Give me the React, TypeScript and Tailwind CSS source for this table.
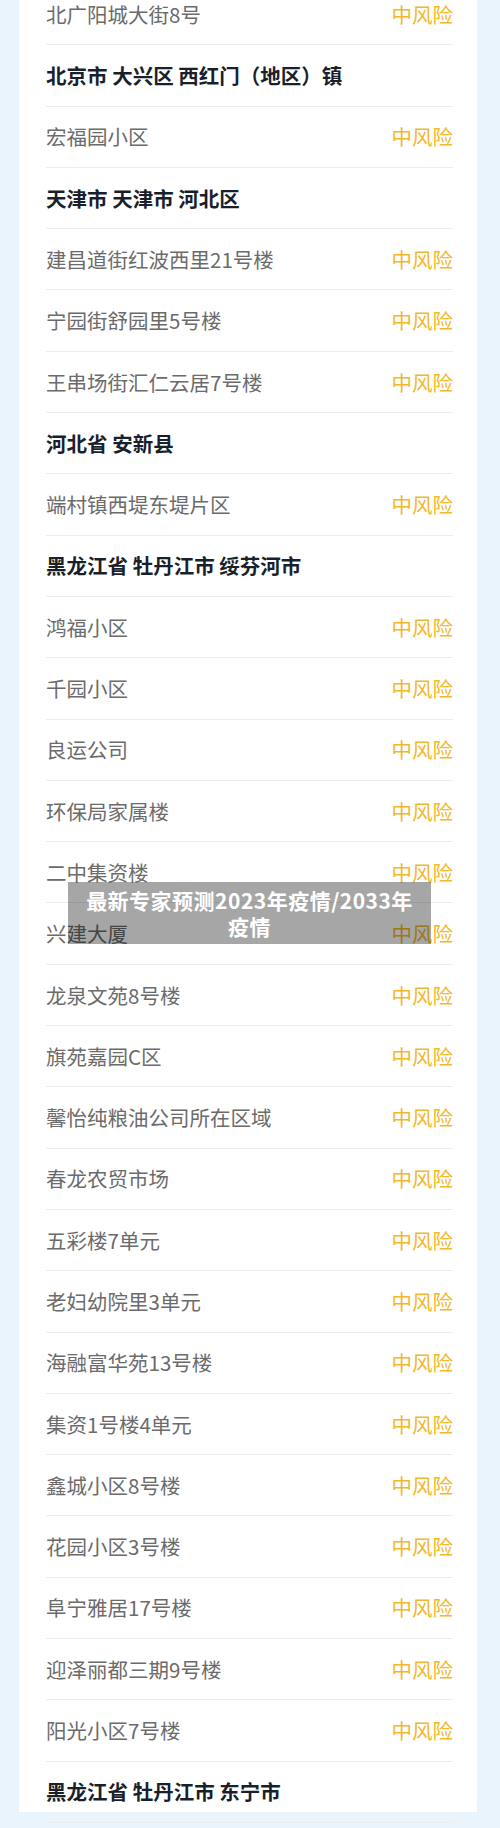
import React from 'react';

type Row = { name: string; header?: boolean };

const rows: Row[] = [
  { name: '北广阳城大街8号' },
  { name: '北京市 大兴区 西红门（地区）镇', header: true },
  { name: '宏福园小区' },
  { name: '天津市 天津市 河北区', header: true },
  { name: '建昌道街红波西里21号楼' },
  { name: '宁园街舒园里5号楼' },
  { name: '王串场街汇仁云居7号楼' },
  { name: '河北省 安新县', header: true },
  { name: '端村镇西堤东堤片区' },
  { name: '黑龙江省 牡丹江市 绥芬河市', header: true },
  { name: '鸿福小区' },
  { name: '千园小区' },
  { name: '良运公司' },
  { name: '环保局家属楼' },
  { name: '二中集资楼' },
  { name: '兴建大厦' },
  { name: '龙泉文苑8号楼' },
  { name: '旗苑嘉园C区' },
  { name: '馨怡纯粮油公司所在区域' },
  { name: '春龙农贸市场' },
  { name: '五彩楼7单元' },
  { name: '老妇幼院里3单元' },
  { name: '海融富华苑13号楼' },
  { name: '集资1号楼4单元' },
  { name: '鑫城小区8号楼' },
  { name: '花园小区3号楼' },
  { name: '阜宁雅居17号楼' },
  { name: '迎泽丽都三期9号楼' },
  { name: '阳光小区7号楼' },
  { name: '黑龙江省 牡丹江市 东宁市', header: true },
];

const App: React.FC = () => {
  return (
    <div
      className="relative h-[1828px] w-[500px] overflow-hidden bg-[#eaf4fd]"
      style={{ fontFamily: '"Noto Sans CJK SC", "Noto Sans", sans-serif' }}
    >
      <div className="ml-[19px] h-full w-[458px] bg-white pl-[27px] pr-[24px]">
        <div className="-mt-[16px]">
          {rows.map((row, i) => (
            <div
              key={i}
              className="flex h-[61.3px] items-center justify-between border-b border-[#ececec]"
            >
              {row.header ? (
                <span className="text-[20.5px] font-bold text-[#1a1f2c]">{row.name}</span>
              ) : (
                <>
                  <span className="text-[20.5px] text-[#6b6b6b]">{row.name}</span>
                  <span className="text-[20.5px] text-[#f2b82a]">中风险</span>
                </>
              )}
            </div>
          ))}
        </div>
      </div>

      {/* title caption over the list */}
      <div className="absolute left-[68px] top-[882px] flex h-[62px] w-[363px] items-center justify-center bg-black/35 px-[10px]">
        <p className="text-center text-[21px] font-bold leading-[26px] tracking-[0.5px] text-white">
          最新专家预测2023年疫情/2033年疫情
        </p>
      </div>
    </div>
  );
};

export default App;
